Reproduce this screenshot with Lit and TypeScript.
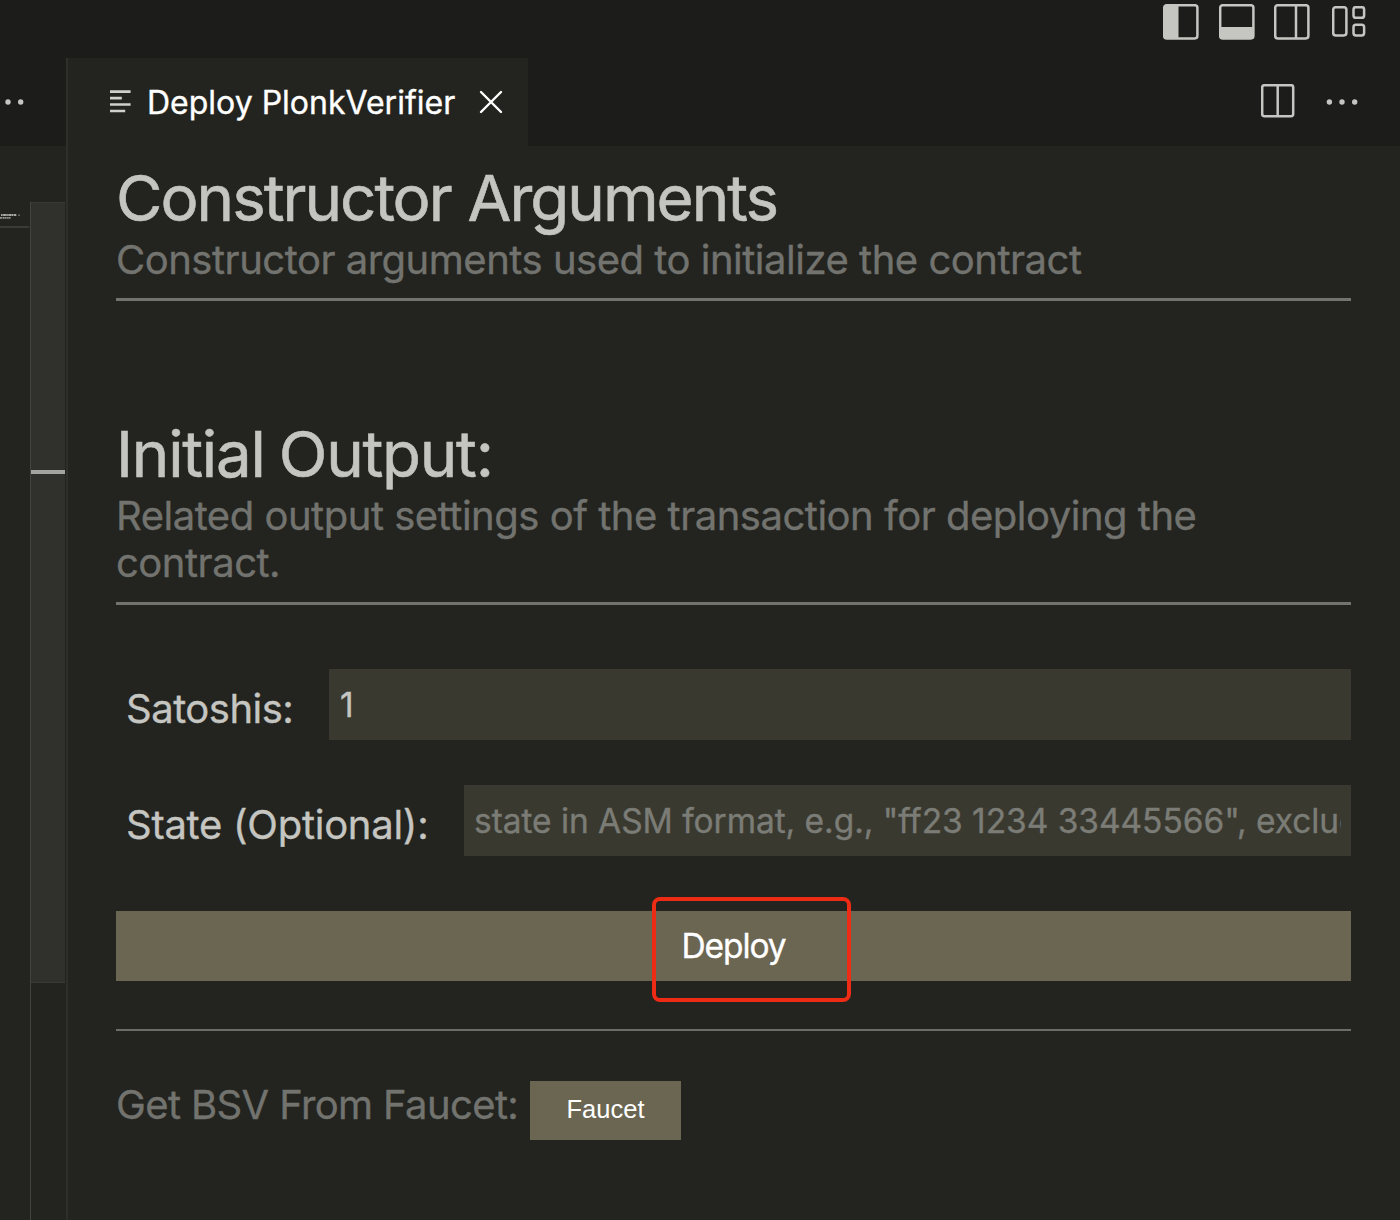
import { LitElement, html, css, svg } from "lit";
import { customElement, property } from "lit/decorators.js";

const SHAPES: Record<string, { w: number; h: number; body: unknown }> = {
  "sidebar-left": {
    w: 36, h: 36,
    body: svg`<rect x="1.2" y="1.2" width="33.2" height="33.2" rx="2.6"/><path class="solid" d="M1 2h14.5v32H1z"/>`,
  },
  "panel-bottom": {
    w: 36, h: 36,
    body: svg`<rect x="1.2" y="1.2" width="33.2" height="33.2" rx="2.6"/><path class="solid" d="M2 23h32v11H2z"/>`,
  },
  "sidebar-right": {
    w: 36, h: 36,
    body: svg`<rect x="1.2" y="1.2" width="33.2" height="33.2" rx="2.6"/><path d="M22 1v33"/>`,
  },
  "layout": {
    w: 34, h: 31,
    body: svg`<rect x="1.2" y="1.2" width="13.2" height="28.2" rx="2.6"/><rect x="21.5" y="1.2" width="10.6" height="10.6" rx="2.4"/><rect x="21.5" y="18.8" width="10.6" height="10.6" rx="2.4"/>`,
  },
  "split": {
    w: 34, h: 34,
    body: svg`<rect x="1.2" y="1.2" width="31" height="31" rx="2.2"/><path d="M16.7 1v31"/>`,
  },
  "more": {
    w: 32, h: 6,
    body: svg`<g class="solid"><circle cx="3.4" cy="3" r="2.7"/><circle cx="16" cy="3" r="2.7"/><circle cx="28.7" cy="3" r="2.7"/></g>`,
  },
  "lines": {
    w: 21, h: 23,
    body: svg`<path d="M0 1.6h20.6M0 8.1h11.8M0 14.5h20.6M0 21h15.2" stroke-width="2.6"/>`,
  },
  "close": {
    w: 24, h: 24,
    body: svg`<path d="M2 2l20 20M22 2L2 22" stroke-width="2.4" stroke-linecap="round"/>`,
  },
};

@customElement("ui-icon")
export class UiIcon extends LitElement {
  @property() name = "more";
  static styles = css`
    :host { display: block; flex: none; line-height: 0; }
    svg { display: block; fill: none; stroke: currentColor; stroke-width: 2.5; }
    .solid { fill: currentColor; stroke: none; }
  `;
  render() {
    const s = SHAPES[this.name];
    return html`<svg width=${s.w} height=${s.h} viewBox="0 0 ${s.w} ${s.h}">${s.body}</svg>`;
  }
}

@customElement("editor-rail")
export class EditorRail extends LitElement {
  static styles = css`
    :host { display: flex; flex-direction: column; width: 66px; flex: none; overflow: hidden; }
    .strip { height: 88px; flex: none; background: #1c1c1a; color: #c5c5c1; display: flex; align-items: center; justify-content: flex-end; padding-right: 42.5px; }
    .body { flex: 1; display: grid; grid-template-columns: 30px 36px; padding-top: 56px; }
    .map { display: flex; flex-direction: column; }
    .code { height: 24px; flex: none; }
    .code svg { display: block; }
    .fold { height: 2px; background: #3a3b36; margin-right: 1px; }
    .ruler { border-left: 1px solid #42433d; }
    .slider { height: 781px; width: 34px; background: #30312c; border-top: 1px solid #383933; border-bottom: 1px solid #383933; box-sizing: border-box; padding-top: 267px; }
    .mark { height: 4px; background: #a3a49f; }
  `;
  render() {
    return html`
      <div class="strip"><ui-icon name="more"></ui-icon></div>
      <div class="body">
        <div class="map">
          <div class="code">
            <svg width="30" height="24" viewBox="0 0 30 24" fill="none" stroke="#a9aaa4">
              <path d="M1 13h15.5" stroke-width="2" stroke-dasharray="1.6 .5 2.8 .3"/>
              <path d="M18.3 13.2h1.6" stroke-width="1.6" opacity=".6"/>
              <path d="M0 15.8h10.5" stroke-width="1.7" stroke-dasharray="2.2 .5 1.4 .3" opacity=".85"/>
            </svg>
          </div>
          <div class="fold"></div>
        </div>
        <div class="ruler"><div class="slider"><div class="mark"></div></div></div>
      </div>`;
  }
}

@customElement("form-section")
export class FormSection extends LitElement {
  @property() heading = "";
  @property() note = "";
  static styles = css`
    :host { display: block; border-bottom: 3px solid #72736f; padding-bottom: 15px; }
    h1 { margin: 0; font-size: 63.6px; line-height: 76px; font-weight: 400; color: #c4c5c0; -webkit-text-stroke: 0.6px #c4c5c0; letter-spacing: var(--heading-track, 0); word-spacing: var(--heading-gap, 0); white-space: nowrap; }
    p { margin: 0; font-size: 40px; line-height: 47.5px; color: #72736f; letter-spacing: -0.49px; }
  `;
  render() {
    return html`<h1>${this.heading}</h1><p>${this.note}</p>`;
  }
}

@customElement("app-root")
export class AppRoot extends LitElement {
  static styles = css`
    :host { display: flex; flex-direction: column; width: 1400px; height: 1220px; overflow: hidden; background: #23241f; font-family: Inter, "Liberation Sans", sans-serif; -webkit-text-stroke: 0.35px currentColor; color: #c5c5c1; }
    * { box-sizing: border-box; }
    .titlebar { height: 58px; flex: none; background: #1c1c1a; display: flex; justify-content: flex-end; align-items: flex-start; padding: 4.4px 33.8px 0 0; gap: 19.8px; }
    .titlebar .last { padding-top: 2px; margin-left: 2px; }
    .main { flex: 1; min-height: 0; display: flex; }
    .pane { flex: 1; min-width: 0; border-left: 2px solid #2e2f2a; display: flex; flex-direction: column; }
    .tabs { height: 88px; flex: none; background: #1c1c1a; display: flex; align-items: center; }
    .tab { width: 460px; height: 88px; background: #23241f; display: flex; align-items: center; padding-left: 42px; color: #fff; }
    .tab .kind { color: #d0d0cc; padding-bottom: 2px; }
    .name { font-size: 32px; line-height: 40px; margin-left: 16px; padding-top: 2px; width: 332px; white-space: nowrap; }
    .actions { margin-left: auto; display: flex; align-items: center; gap: 31px; padding-right: 42px; }
    .actions .split { padding-bottom: 2px; }
    .view { padding: 13.5px 49px 0 48px; display: flex; flex-direction: column; }
    .first { --heading-track: -2px; --heading-gap: 1px; }
    .second { margin-top: 114.5px; --heading-track: -1.25px; --heading-gap: -2.5px; }
    .field { display: flex; align-items: center; height: 71px; }
    .satoshis { margin-top: 64px; }
    .state { margin-top: 45px; }
    label { font-size: 40px; line-height: 48px; padding: 10px 0 0 10px; flex: none; white-space: nowrap; }
    .satoshis label { width: 213px; letter-spacing: -0.5px; }
    .state label { width: 348px; letter-spacing: -0.27px; }
    input { flex: 1; min-width: 0; height: 71px; border: 0; border-radius: 0; margin: 0; padding: 2px 10px 0 10px; outline: 0; background: #393930; color: #c5c5c1; font-family: inherit; font-size: 33.5px; letter-spacing: -0.05px; }
    .satoshis input { padding-left: 11px; }
    input::placeholder { color: #7b7c76; opacity: 1; }
    .deploy { position: relative; margin-top: 55px; height: 70px; }
    button { border: 0; margin: 0; padding: 0; background: #6b6652; color: #fff; }
    .deploy button { width: 100%; height: 70px; display: block; font-family: inherit; font-size: 33.5px; letter-spacing: -1.1px; }
    .callout { position: absolute; left: 535.5px; top: -14px; width: 199px; height: 105px; border: 4px solid #ee2c15; border-radius: 8px; }
    .rule { height: 2.5px; background: #6c6d69; margin-top: 48px; }
    .faucet { display: flex; margin-top: 49.5px; height: 59px; color: #72736f; }
    .faucet span { width: 414px; font-size: 40px; line-height: 48px; letter-spacing: -0.63px; white-space: nowrap; }
    .faucet button { width: 151px; height: 59px; padding-bottom: 1px; font-family: "Liberation Sans", Arial, sans-serif; font-size: 25.5px; -webkit-text-stroke: 0; }
  `;

  render() {
    return html`
      <div class="titlebar">
        <ui-icon name="sidebar-left"></ui-icon>
        <ui-icon name="panel-bottom"></ui-icon>
        <ui-icon name="sidebar-right"></ui-icon>
        <ui-icon class="last" name="layout"></ui-icon>
      </div>
      <div class="main">
        <editor-rail></editor-rail>
        <div class="pane">
          <div class="tabs">
            <div class="tab">
              <ui-icon class="kind" name="lines"></ui-icon>
              <span class="name">Deploy PlonkVerifier</span>
              <ui-icon name="close"></ui-icon>
            </div>
            <div class="actions">
              <ui-icon class="split" name="split"></ui-icon>
              <ui-icon name="more"></ui-icon>
            </div>
          </div>
          <div class="view">
            <form-section class="first" heading="Constructor Arguments" note="Constructor arguments used to initialize the contract"></form-section>
            <form-section class="second" heading="Initial Output:" note="Related output settings of the transaction for deploying the contract."></form-section>
            <div class="field satoshis"><label for="sats">Satoshis:</label><input id="sats" .value=${"1"} /></div>
            <div class="field state">
              <label for="st">State (Optional):</label>
              <input id="st" placeholder='state in ASM format, e.g., "ff23 1234 33445566", excluding op_return' />
            </div>
            <div class="deploy"><button>Deploy</button><div class="callout"></div></div>
            <div class="rule"></div>
            <div class="faucet"><span>Get BSV From Faucet:</span><button>Faucet</button></div>
          </div>
        </div>
      </div>`;
  }
}
